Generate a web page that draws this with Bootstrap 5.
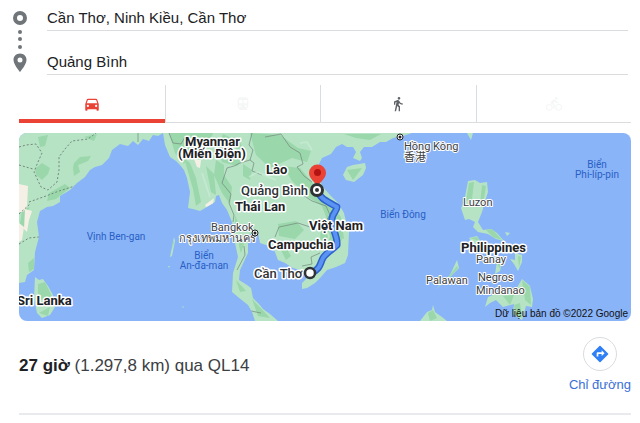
<!DOCTYPE html>
<html lang="vi">
<head>
<meta charset="utf-8">
<meta name="viewport" content="width=device-width, initial-scale=1">
<title>Cần Thơ – Quảng Bình</title>
<link href="https://cdn.jsdelivr.net/npm/bootstrap@5.3.0/dist/css/bootstrap.min.css" rel="stylesheet">
<style>
body { font-family: "Liberation Sans", Arial, sans-serif; color: #202124; }
.directions { padding: 4px 9px 0 19px; }
.route-fields { margin-left: -8px; gap: 18px; padding-right: 3px; }
.route-marks { width: 18px; padding-top: 6px; color: #70757a; }
.route-input { height: 27px; font-size: 15px; line-height: 24px; color: #202124; border-color: #dadce0 !important; background: transparent; }
.route-list { gap: 17px; }
.mode-tabs { margin-top: 10px; height: 38px; border-bottom: 1px solid #dadce0; }
.mode-tab { flex: 155 1 0; border-radius: 0; color: #5f6368; }
.mode-tab, .mode-tab:disabled { border-left: 1px solid #dadce0; }
.mode-tab:first-child { flex-grow: 146; border-left: 0; }
.mode-tab.active { color: #ea4335; box-shadow: inset 0 -3px #ea4335, 0 1px #ea4335; }
.mode-tab:disabled { color: #f5f6f6; opacity: 1; }
.route-map { margin-top: 10px; border-radius: 8px; background: #8ab4f8; }
.route-map text { font-family: Roboto, "Noto Sans CJK TC", sans-serif; paint-order: stroke; stroke-linejoin: round; }
.land { fill: #b5e3c4; }
.forest { fill: #9ad7ab; }
.sand { fill: #f5f0e5; }
.frontier { fill: none; stroke: #75877d; stroke-width: 1; }
.nation { font-size: 13px; font-weight: 700; fill: #202124; stroke: #fff; stroke-width: 3px; }
.place { font-size: 13px; font-weight: 500; fill: #303336; stroke: #fff; stroke-width: 3px; }
.locality { font-size: 11px; fill: #3c4043; stroke: #fff; stroke-width: 2px; }
.sea { font-size: 10px; fill: #285fc4; text-anchor: middle; }
.route-map .credit { font-family: "Liberation Sans", Arial, sans-serif; font-size: 10px; fill: #111; }
.summary { margin-top: 16px; padding-bottom: 18px; border-bottom: 2px solid #e8eaed; }
.summary-text { font-size: 17px; line-height: 24px; color: #3c4043; }
.summary-text strong { color: #202124; }
.go-link { font-size: 13px; line-height: 20px; color: #3b6fd8; gap: 4px; }
.go-circle { width: 34px; height: 34px; border: 1px solid #dadce0; }
</style>
<script src="https://cdn.jsdelivr.net/npm/bootstrap@5.3.0/dist/js/bootstrap.bundle.min.js"></script>
</head>
<body>
<main class="directions">
  <form class="route-fields d-flex">
    <svg class="route-marks flex-shrink-0" width="18" height="70" viewBox="0 0 18 64" fill="currentColor" aria-hidden="true">
      <circle cx="9" cy="8" r="5" fill="none" stroke="currentColor" stroke-width="4"/>
      <circle cx="9" cy="22" r="2"/><circle cx="9" cy="29" r="2"/><circle cx="9" cy="37" r="2"/>
      <path fill-rule="evenodd" d="M9 43.500c-3.700 0-6.500 2.800-6.500 6.300 0 4.800 6.500 12.200 6.500 12.200s6.500-7.400 6.500-12.200c0-3.500-2.800-6.300-6.500-6.300zm0 4a2.500 2.500 0 1 1 0 5 2.500 2.500 0 0 1 0-5z"/>
    </svg>
    <div class="route-list flex-grow-1 d-flex flex-column">
      <input class="route-input w-100 border-0 border-bottom p-0" type="text" aria-label="Điểm xuất phát" value="Cần Thơ, Ninh Kiều, Cần Thơ">
      <input class="route-input w-100 border-0 border-bottom p-0" type="text" aria-label="Điểm đến" value="Quảng Bình">
    </div>
  </form>

  <nav class="mode-tabs d-flex" aria-label="Phương tiện">
    <button type="button" class="mode-tab btn p-0 border-top-0 border-end-0 border-bottom-0 active border-start-0" aria-label="Lái xe">
      <svg width="18" height="18" viewBox="0 0 24 24" fill="currentColor"><path fill-rule="evenodd" d="M18.900 6c-.2-.6-.8-1-1.400-1h-11c-.7 0-1.200.4-1.400 1L3 12v8c0 .6.5 1 1 1h1c.6 0 1-.4 1-1v-1h12v1c0 .6.500 1 1 1h1c.6 0 1-.4 1-1v-8l-2.100-6zM6.500 16a1.500 1.500 0 1 1 0-3 1.500 1.500 0 0 1 0 3zm11 0a1.500 1.500 0 1 1 0-3 1.500 1.500 0 0 1 0 3zM5 11l1.500-4.500h11L19 11H5z"/></svg>
    </button>
    <button type="button" class="mode-tab btn p-0 border-top-0 border-end-0 border-bottom-0" aria-label="Phương tiện công cộng" disabled>
      <svg width="16" height="16" viewBox="0 0 24 24" fill="currentColor"><path fill-rule="evenodd" d="M12 2c-4.400 0-8 .5-8 4v9.500A3.500 3.500 0 0 0 7.500 19L6 20.500v.5h12v-.5L16.500 19a3.500 3.500 0 0 0 3.500-3.500V6c0-3.500-3.600-4-8-4zM7.500 17a1.500 1.500 0 1 1 0-3 1.500 1.500 0 0 1 0 3zm3.500-6H6V6h5v5zm5.500 6a1.500 1.500 0 1 1 0-3 1.500 1.500 0 0 1 0 3zm1.500-6h-5V6h5v5z"/></svg>
    </button>
    <button type="button" class="mode-tab btn p-0 border-top-0 border-end-0 border-bottom-0" aria-label="Đi bộ">
      <svg width="16" height="16" viewBox="0 0 24 24" fill="currentColor"><path d="M13.500 5.500c1.100 0 2-.9 2-2s-.9-2-2-2-2 .9-2 2 .9 2 2 2zM9.800 8.900 7 23h2.100l1.800-8 2.100 2v6h2v-7.500l-2.100-2 .6-3C14.800 12 16.800 13 19 13v-2c-1.900 0-3.500-1-4.300-2.400l-1-1.600c-.4-.6-1-1-1.700-1-.3 0-.5.1-.8.1L6 8.300V13h2V9.600l1.800-.7"/></svg>
    </button>
    <button type="button" class="mode-tab btn p-0 border-top-0 border-end-0 border-bottom-0" aria-label="Đạp xe" disabled>
      <svg width="16" height="16" viewBox="0 0 24 24" fill="currentColor"><path fill-rule="evenodd" d="M15.500 5.500a2 2 0 1 0 0-4 2 2 0 0 0 0 4zM5 12a5 5 0 1 0 0 10 5 5 0 0 0 0-10zm0 8.500a3.500 3.500 0 1 1 0-7 3.500 3.500 0 0 1 0 7zm5.800-10 2.400-2.400.8.800c1.300 1.300 3 2.100 5.100 2.100V9c-1.500 0-2.700-.6-3.600-1.500l-1.900-1.900c-1-.8-2-.8-2.900 0L7.800 8.400c-.8.900-.8 2 0 2.800L11 14v5h2v-6.200l-2.200-2.300zM19 12a5 5 0 1 0 0 10 5 5 0 0 0 0-10zm0 8.500a3.500 3.500 0 1 1 0-7 3.500 3.500 0 0 1 0 7z"/></svg>
    </button>
  </nav>

  <svg class="route-map d-block w-100" viewBox="19 133 612 188" role="img" aria-label="Bản đồ tuyến đường từ Cần Thơ đến Quảng Bình">
    <defs>
      <clipPath id="ground"><path id="coast" d="M19 133H163L165 145 170 157 176 161 180 165 184 170 187 178 190 192 188 208 193 209 200 211 207 207 215 202 216 196 219 195 222 203 227 210 232 222 235 243 238 257 233 273 232 292 238 297 248 305 252 312 255 321H278L270 314 263 309 259 304 253 298 251 288 247 285 239 280 240 270 248 253 248 240 250 234 258 233 260 243 266 245 273 247 278 260 285 263 293 268 300 270 307 278 302 283 302 289 307 288 315 283 320 278 327 270 336 267 345 263 348 255 349 232 346 222 344 213 338 203 330 195 323 187 317 175 318 166 322 158 331 154 336 147 342 144 347 147 353 147 356 152 353 158 360 161 362 158 360 152 364 147 372 147 380 142 386 142 393 138 403 136 412 133H163L158 136 153 135 149 141 143 139 138 145 133 141 128 146 120 144 112 150 109 158 102 165 95 167 90 170 85 177 77 183 70 190 60 196 60 202 53 206 47 207 40 211 37 222 39 237 35 252 34 270 27 275 25 282 19 283Z"/></clipPath>
    </defs>
    <use href="#coast" class="land"/>
    <g clip-path="url(#ground)">
      <path class="forest" d="M38 137 48 135 45 146 40 147ZM74 163 80 157 91 156 88 161 78 165 80 172 74 176 73 168ZM35 169 42 163 50 168 48 174 42 180 36 175ZM49 193 65 184 70 188 56 199 47 201ZM84 137 97 134 94 141ZM22 210 30 207 25 215 26 230 20 224ZM28 263 34 258 34 269 29 272ZM169 133H213L208 145 198 150 191 149 184 164 175 153ZM184 158 190 163 196 178 201 202 196 206 193 189ZM206 166 214 174 216 195 211 192ZM223 134 240 142 247 156 237 166 222 162 218 148ZM216 160 224 165 224 175 232 187 230 204 222 193 214 175ZM243 164 252 170 250 180 243 176ZM250 133 280 135 298 148 311 151 307 162 292 158 270 168 256 155ZM283 166 300 168 315 186 327 201 341 217 344 239 333 235 322 206 308 197 292 181ZM235 215 239 225 235 234ZM240 236 244 244 241 253 239 246ZM278 224 296 221 304 230 295 239 279 236ZM321 227 338 224 342 240 331 250 320 240ZM285 246 291 256 286 260 281 250ZM236 280 246 291 240 292ZM252 299 270 318 258 316ZM344 134 381 134 370 140 356 138Z"/>
      <path class="sand" d="M19 184 28 186 27 207 23 212 19 212ZM25 209 32 211 29 220 27 232 24 229ZM19 223 24 227 22 240 19 242ZM194 159 201 160 200 168 197 167ZM205 205 214 198 213 204 206 207Z"/>
      <g class="frontier" stroke-dasharray="2 2">
        <path d="M19 147 26 145 36 144 42 153 38 162 34 172 41 187 48 190 57 182 59 170 59 157 65 149 72 141 88 139 96 133M19 165 33 169M29 202 46 196 59 191 78 185M19 214 30 204M19 244 29 238 39 237"/>
      </g>
      <g class="frontier" stroke-opacity=".7">
        <path d="M169 133 173 143 181 144 185 137M252 133 249 145 253 150 250 160 240 163 234 166 227 168 224 177 222 183 231 194 229 203 234 215 233 222M250 160 254 163 252 171 262 175M265 137 281 134 290 147 300 153 303 164 297 167 304 176 312 182M300 193 312 201 326 206 330 215 324 224M275 237 279 227 298 223 313 228M244 246 245 255 237 270M302 266 312 264 311 257 320 253M138 133 138 142M251 311 261 313"/>
      </g>
      <g fill="none" stroke="#c9ebd4" stroke-width="2" opacity=".7"><path d="M221 146 234 147 238 157M249 177 258 172 276 180M300 143 307 142 312 150M202 173 210 197M323 223 329 236 325 249"/></g>
    </g>
    <g class="land">
      <path d="M35 277 39 280 43 279 48 286 53 295 55 307 50 315 42 318 37 313 34 298Z"/>
      <path d="M343 175 347 167 353 165 365 163 366 168 363 175 354 182 346 180Z"/>
      <path d="M467 133H473L471 140Z"/>
      <path d="M468 181 475 180 480 183 487 182 488 192 485 201 482 212 478 222 483 230 491 229 497 233 504 241 496 239 488 234 478 232 473 227 475 222 469 219 465 220 461 208 464 202Z"/>
      <path d="M469 238 477 236 481 242 473 244ZM505 232 510 233 507 236ZM510 259 515 260 515 253 522 255 522 262 518 271 514 264ZM497 262 503 258 500 271 495 274ZM488 297 500 292 515 291 522 279 530 286 533 299 532 307 526 306 522 320 513 314 514 304 503 307 496 300 490 303 485 307Z"/>
      <path d="M435 290 450 275 457 260 459 268 448 279Z"/>
      <path d="M420 321 427 312 432 310 433 305 435 312 442 317 447 321Z"/>
      <path d="M174 237 175 241 172 256 170 257 172 247ZM168 266 170 266 169 268ZM182 307 184 306 183 308Z"/>
    </g>
    <g class="forest">
      <path d="M38 284 45 282 52 296 46 302 38 298ZM39 313 50 307 48 316ZM347 170 362 168 353 180ZM469 183 474 182 472 199 466 201ZM482 185 486 186 484 198 480 205ZM486 230 492 229 502 240 493 237ZM470 238 477 237 480 241ZM497 263 502 260 500 269ZM518 256 521 257 519 268ZM522 280 530 287 531 305 525 300ZM503 296 514 295 510 305ZM514 305 520 303 522 318 516 315ZM437 288 449 276 457 266 458 268 447 280ZM428 313 433 310 437 318 430 321ZM173 241 174 242 172 250Z"/>
    </g>
    <g class="sea">
      <text x="116" y="240">Vịnh Ben-gan</text>
      <text x="204" y="259">Biển</text><text x="204" y="269">An-đa-man</text>
      <text x="403" y="218">Biển Đông</text>
      <text x="597" y="168">Biển</text><text x="597" y="178">Phi-líp-pin</text>
    </g>
    <g class="locality">
      <text x="211" y="231">Bangkok</text><text x="179" y="242">กรุงเทพมหานคร</text>
      <text x="404" y="150">Hồng Kông</text><text x="404" y="161">香港</text>
      <text x="463" y="206">Luzon</text><text x="476" y="263">Panay</text>
      <text x="478" y="281">Negros</text><text x="476" y="294">Mindanao</text><text x="426" y="284">Palawan</text>
    </g>
    <g fill="#fff" stroke="#202124" stroke-width="1"><circle cx="255" cy="233" r="3"/><circle cx="400" cy="137" r="3"/></g>
    <g fill="#202124"><circle cx="255" cy="233" r="1.500"/><circle cx="400" cy="137" r="1.500"/></g>
    <g fill="none" stroke-linecap="round" stroke-linejoin="round">
      <path d="M318 191C320 199 327 201 337 207 337 211 332 214 332 219 331 228 338 236 337 245 332 250 326 253 323 258 320 263 321 269 311 273" stroke="#2d61ce" stroke-width="7"/>
      <path d="M318 191C320 199 327 201 337 207 337 211 332 214 332 219 331 228 338 236 337 245 332 250 326 253 323 258 320 263 321 269 311 273" stroke="#5b93f2" stroke-width="4"/>
    </g>
    <g class="nation">
      <text x="185" y="146">Myanmar</text><text x="178" y="158">(Miến Điện)</text>
      <text x="266" y="174">Lào</text><text x="235" y="211">Thái Lan</text>
      <text x="309" y="230">Việt Nam</text><text x="268" y="249">Campuchia</text>
      <text x="461" y="252">Philippines</text><text x="17" y="305">Sri Lanka</text>
    </g>
    <g class="place"><text x="241" y="195">Quảng Bình</text><text x="254" y="278">Cần Thơ</text></g>
    <path d="M317 187c-1-5-8-8-8-14a8 8 0 0 1 17 0c0 6-7 9-8 14Z" fill="#ea4335"/>
    <circle cx="317.500" cy="172.500" r="3.500" fill="#b31412"/>
    <g fill="#fff" stroke="#303336"><circle cx="317" cy="190" r="5.500" stroke-width="3"/><circle cx="310" cy="273" r="5" stroke-width="2.500"/></g>
    <circle cx="317" cy="190" r="2" fill="#303336"/>
    <text class="credit" x="628" y="317" text-anchor="end">Dữ liệu bản đồ ©2022 Google</text>
  </svg>

  <section class="summary d-flex align-items-center justify-content-between">
    <p class="summary-text mb-0"><strong>27 giờ</strong> (1.297,8 km) qua QL14</p>
    <a class="go-link d-flex flex-column align-items-center text-decoration-none" href="#">
      <span class="go-circle rounded-circle d-flex align-items-center justify-content-center">
        <svg width="20" height="20" viewBox="0 0 24 24" aria-hidden="true"><path fill="#2f80f6" fill-rule="evenodd" d="m21.700 11.300-9-9a1 1 0 0 0-1.400 0l-9 9a1 1 0 0 0 0 1.400l9 9c.4.4 1 .4 1.400 0l9-9a1 1 0 0 0 0-1.400zM14 14.500V12h-4v3H8v-4c0-.6.4-1 1-1h5V7.500l3.500 3.500-3.500 3.500z"/></svg>
      </span>
      <span>Chỉ đường</span>
    </a>
  </section>
</main>
</body>
</html>
